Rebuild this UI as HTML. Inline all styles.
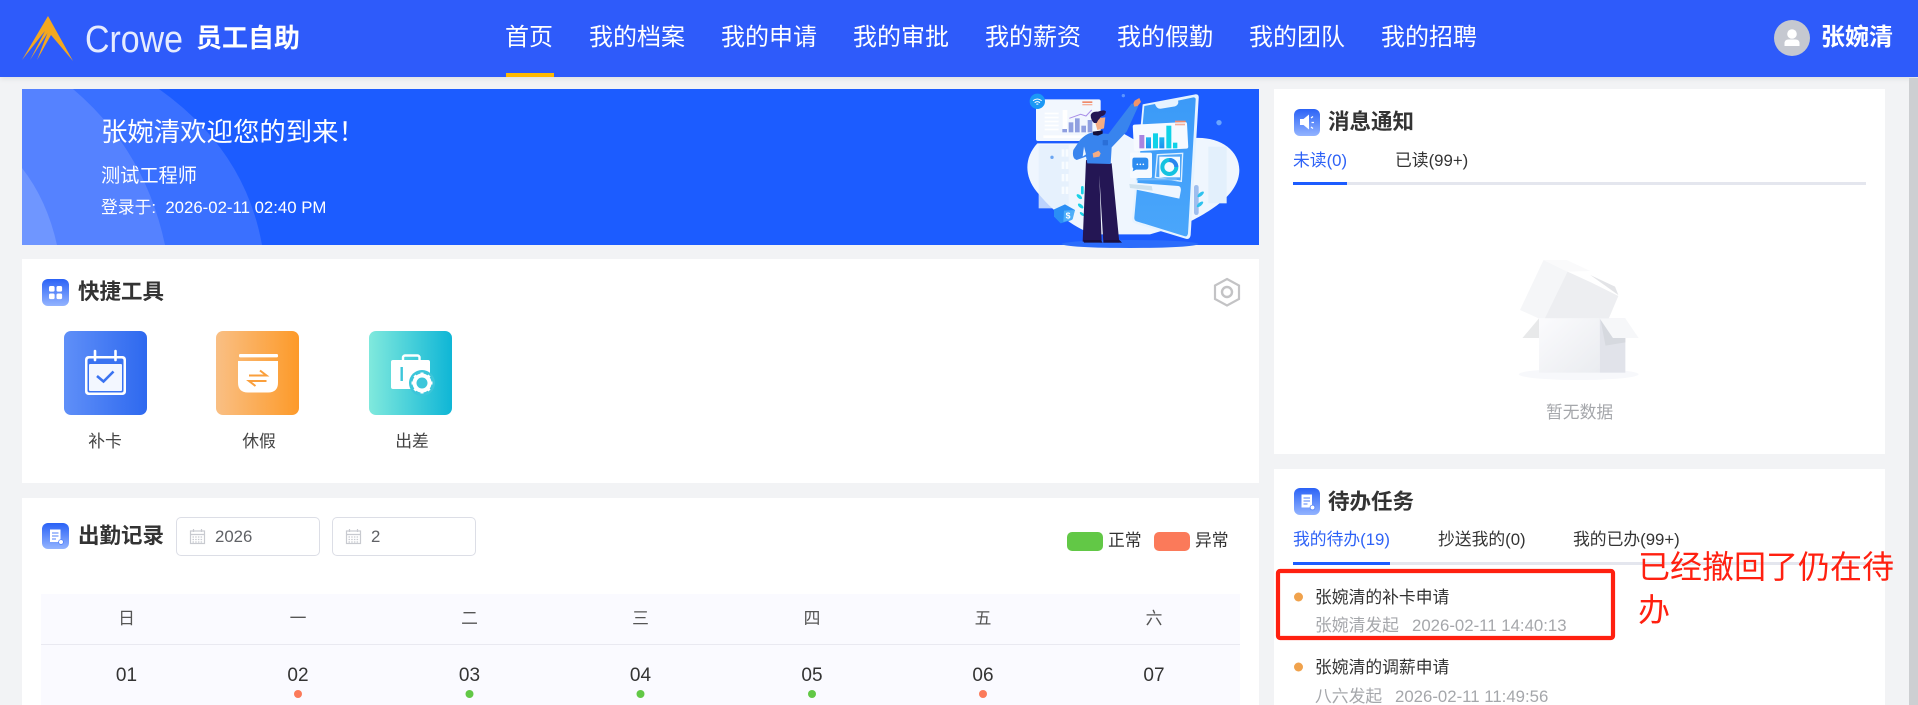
<!DOCTYPE html>
<html lang="zh">
<head>
<meta charset="utf-8">
<title>员工自助</title>
<style>
html,body{margin:0;padding:0;width:1918px;height:705px;overflow:hidden;background:#f2f3f5;}
body{position:relative;font-family:"Liberation Sans","Noto Sans CJK SC",sans-serif;color:#333;}
.b{position:absolute;}
.t{position:absolute;white-space:nowrap;height:30px;line-height:30px;}
.c{transform:translateX(-50%);}
.nav{font-size:24px;color:#fff;top:23px;}
.h{font-size:21.5px;font-weight:700;color:#333;}
.s{font-size:16.8px;}
.g{color:#a5a7ab;}
svg{position:absolute;left:0;top:0;}
</style>
</head>
<body>
<div class="b" style="left:0;top:0;width:1918px;height:77px;background:#2e5bfa;box-shadow:0 2px 5px rgba(0,0,0,.08);"></div>
<div class="b" style="left:1909px;top:78px;width:9px;height:627px;background:#cdcfd2;"></div>
<div class="b" style="left:22px;top:89px;width:1237px;height:156px;background:#1c5cff;"></div>
<div class="b" style="left:22px;top:259px;width:1237px;height:224px;background:#fff;"></div>
<div class="b" style="left:22px;top:498px;width:1237px;height:207px;background:#fff;"></div>
<div class="b" style="left:1274px;top:89px;width:611px;height:365px;background:#fff;"></div>
<div class="b" style="left:1274px;top:469px;width:611px;height:236px;background:#fff;"></div>
<div class="b" style="left:41px;top:594px;width:1199px;height:111px;background:#fafaff;"></div>
<div class="b" style="left:41px;top:644px;width:1199px;height:1px;background:#e9e9f1;"></div>
<div class="b" style="left:176px;top:517px;width:142px;height:37px;border:1px solid #dcdee6;border-radius:5px;"></div>
<div class="b" style="left:332px;top:517px;width:142px;height:37px;border:1px solid #dcdee6;border-radius:5px;"></div>
<div class="b" style="left:1293px;top:182px;width:573px;height:3px;background:#e4e6ee;"></div>
<div class="b" style="left:1293px;top:182px;width:54px;height:3px;background:#1c5cff;"></div>
<div class="b" style="left:1293px;top:562px;width:573px;height:3px;background:#e4e6ee;"></div>
<div class="b" style="left:1293px;top:562px;width:97px;height:3px;background:#1c5cff;"></div>
<div class="b" style="left:506px;top:73px;width:48px;height:4px;background:#ffb900;"></div>

<svg width="1918" height="705" viewBox="0 0 1918 705">
<defs>
<linearGradient id="sec" x1="0" y1="0" x2="0" y2="1"><stop offset="0" stop-color="#2a62f6"/><stop offset="1" stop-color="#93b4ff"/></linearGradient>
<linearGradient id="t1"><stop offset="0" stop-color="#5f8ff8"/><stop offset="1" stop-color="#2e69ef"/></linearGradient>
<linearGradient id="t2"><stop offset="0" stop-color="#f9bf84"/><stop offset="1" stop-color="#fd9a29"/></linearGradient>
<linearGradient id="t3"><stop offset="0" stop-color="#80e9dd"/><stop offset="1" stop-color="#0fb6d6"/></linearGradient>
<linearGradient id="ph" x1="0" y1="0" x2="0" y2="1"><stop offset="0" stop-color="#3b9af8"/><stop offset="1" stop-color="#4aa6fb"/></linearGradient>
<linearGradient id="fr" x1="0" y1="0" x2="1" y2="1"><stop offset="0" stop-color="#fbfbfd"/><stop offset="1" stop-color="#eaecf0"/></linearGradient>
<linearGradient id="bar" x1="0" y1="0" x2="0" y2="1"><stop offset="0" stop-color="#1cb8ee"/><stop offset="1" stop-color="#1f8ff0"/></linearGradient>
</defs>

<!-- logo -->
<path d="M48 16 L73 61 L51 35 L37 60 L47.500 33 L30 60 L45 31 L22 60 Z" fill="#f4a81f"/>
<text x="85" y="52" font-family="Liberation Sans" font-size="38" fill="#fff" textLength="98" lengthAdjust="spacingAndGlyphs" opacity=".88">Crowe</text>

<!-- avatar -->
<circle cx="1792" cy="38" r="18" fill="#c5c8d0"/>
<circle cx="1792" cy="34" r="4.8" fill="#fff"/>
<path d="M1784.5 46 v-2.5 q0-4 4-4 h7 q4 0 4 4 V46 Z" fill="#fff"/>

<!-- banner rings -->
<path d="M22 89 H159 Q245 150 262 245 H22 Z" fill="#3a70ff"/>
<path d="M22 89 H73 Q145 150 165 245 H22 Z" fill="#5582ff"/>
<path d="M22 168 Q47 200 57 245 H22 Z" fill="#6f96ff"/>

<!-- illustration -->
<g transform="translate(960 60) scale(.33333)">
<ellipse cx="510" cy="552" rx="205" ry="12" fill="#2b6cfb"/>
<path d="M232 250 C195 290 190 345 230 395 C275 450 335 500 400 523 L570 523 L680 490 C760 450 838 400 838 330 C838 265 770 225 690 235 L560 260 L480 215 L420 250 Z" fill="#eff6fe"/>
<rect x="236" y="255" width="90" height="190" fill="#e3f0fc" opacity=".8"/>
<g fill="#f8fcff"><rect x="305" y="268" width="8" height="22"/><rect x="317" y="268" width="8" height="22"/><rect x="305" y="305" width="8" height="22"/><rect x="317" y="305" width="8" height="22"/><rect x="305" y="342" width="8" height="22"/><rect x="317" y="342" width="8" height="22"/><rect x="305" y="380" width="8" height="22"/><rect x="317" y="380" width="8" height="22"/></g>
<rect x="745" y="260" width="55" height="170" fill="#e3f0fc"/>
<circle cx="276" cy="292" r="5" fill="#6aa5f2"/>
<rect x="228" y="118" width="194" height="125" rx="6" fill="#f2f7fe"/>
<g fill="#fff"><rect x="254" y="158" width="42" height="5"/><rect x="254" y="170" width="42" height="5"/><rect x="254" y="182" width="42" height="5"/><rect x="254" y="194" width="42" height="5"/><rect x="254" y="206" width="42" height="5"/><rect x="250" y="226" width="150" height="8"/><rect x="308" y="150" width="14" height="65"/></g>
<g fill="#8f9fe0"><rect x="307" y="207" width="14" height="10"/><rect x="326" y="187" width="14" height="30"/><rect x="345" y="175" width="14" height="42"/><rect x="364" y="197" width="14" height="20"/><rect x="383" y="180" width="14" height="37"/></g>
<path d="M328 175 L362 163 L378 168 L395 150" stroke="#a98fe8" stroke-width="3" fill="none"/>
<rect x="367" y="124" width="30" height="5" fill="#f08a6a"/><rect x="367" y="132" width="30" height="4" fill="#f5b09a"/>
<circle cx="232" cy="124" r="23" fill="#1b98f5"/>
<path d="M219 122 q13-10 26 0 M224 128 q8-6 16 0 M229 133 q3-2 6 0" stroke="#fff" stroke-width="3" fill="none"/>
<circle cx="490" cy="107" r="5" fill="#5b95ff"/>
<circle cx="777" cy="188" r="8" fill="#6aa5ff"/>
<!-- plants -->
<g fill="#19d2e6"><ellipse cx="358" cy="410" rx="10" ry="5" transform="rotate(40 358 410)"/><ellipse cx="362" cy="438" rx="10" ry="5" transform="rotate(40 362 438)"/><ellipse cx="366" cy="462" rx="8" ry="4" transform="rotate(40 366 462)"/><rect x="363" y="378" width="8" height="25" rx="4"/></g>
<g fill="#8ab0ea"><rect x="702" y="375" width="14" height="90" rx="7" opacity=".8"/></g>
<g fill="#2fc2ee"><ellipse cx="722" cy="403" rx="12" ry="5" transform="rotate(-40 722 403)"/><ellipse cx="720" cy="433" rx="12" ry="5" transform="rotate(-40 720 433)"/></g>
<!-- phone -->
<path d="M548 133 L706 103 Q718 102 716 116 L692 525 Q690 540 676 536 L525 490 Q515 487 516 476 Z" fill="#e6f3ff"/>
<path d="M553 138 L585 132 Q590 148 604 146 L645 139 Q658 134 654 122 L700 112 Q708 112 707 120 L684 520 Q682 532 672 528 L530 484 Q522 481 523 472 Z" fill="url(#ph)"/>
<rect x="520" y="190" width="163" height="80" rx="6" fill="#f6faff" transform="rotate(-3 600 230)"/>
<rect x="538" y="225" width="15" height="40" fill="#a884e0"/>
<rect x="558" y="232" width="15" height="33" fill="url(#bar)"/>
<rect x="579" y="220" width="15" height="45" fill="#10d2e8"/>
<rect x="598" y="232" width="15" height="33" fill="url(#bar)"/>
<rect x="619" y="197" width="15" height="68" fill="#10d2e8"/>
<rect x="639" y="248" width="13" height="17" fill="#10d2e8"/>
<rect x="645" y="182" width="32" height="5" fill="#f08a6a"/><rect x="645" y="191" width="30" height="5" fill="#f5b09a"/>
<rect x="510" y="278" width="66" height="76" rx="5" fill="#f6faff"/>
<path d="M522 293 h34 q9 0 9 9 v18 q0 9-9 9 h-28 l-10 5 l2-8 q-3-3-3-8 v-16 q0-9 5-9z" fill="#2d8cf0"/>
<circle cx="532" cy="313" r="2.5" fill="#fff"/><circle cx="541" cy="313" r="2.5" fill="#fff"/><circle cx="550" cy="313" r="2.5" fill="#fff"/>
<path d="M592 284 L668 280 L664 364 L586 352 Z" fill="#4fa6f8" stroke="#dff0ff" stroke-width="4"/>
<rect x="598" y="290" width="62" height="62" fill="#f4faff"/>
<circle cx="628" cy="321" r="21" fill="none" stroke="#14c3e0" stroke-width="12"/>
<path d="M628 300 a21 21 0 0 1 21 21" fill="none" stroke="#2a86ef" stroke-width="12"/>
<path d="M508 367 L655 378 Q665 380 662 395 L658 416 L510 385 Z" fill="#eef6ff"/>
<path d="M508 372 L575 378 L578 392 L510 384Z" fill="#cfe2ee"/>
<rect x="530" y="355" width="120" height="6" fill="#6fb7fa"/>
<!-- coin -->
<path d="M282 448 L315 433 L345 450 L335 480 L302 490 L282 470 Z" fill="#2a8ef5"/>
<path d="M312 452 L345 450 L338 478 L310 486 Z" fill="#4eaef9"/>
<text x="317" y="476" font-family="Liberation Sans" font-size="26" font-weight="700" fill="#fff">$</text>
<!-- man -->
<path d="M400 300 H378 L368 545 L425 548 L418 345 L430 548 L478 548 L455 310 Z" fill="#241654"/>
<path d="M378 540 L370 540 L372 548 H428 L422 540 Z M432 540 L430 548 H486 L478 540 Z" fill="#1a0f3e"/>
<path d="M360 240 Q385 215 405 218 L445 222 L515 130 L535 138 L500 215 L455 262 L452 312 L382 310 L378 290 L350 300 Q335 295 340 270 Z" fill="#3884ee"/>
<path d="M520 130 l4-8 14-8 l5 12 -10 12 -10 2z" fill="#f09468"/>
<path d="M398 280 l18-8 6 8 -4 10 -18 3z" fill="#f4ac84"/>
<path d="M372 260 L378 283 L368 290Z" fill="#eef6fe"/>
<path d="M398 215 l30-4 l0 10 l-14 6 l-14-2 z" fill="#15103a"/>
<path d="M402 175 L436 172 L432 205 L412 210 Z" fill="#f4ac84"/>
<path d="M392 165 q4-12 22-10 q20-8 24 0 q-2 12-14 14 q-6 8-10 12 l-4 8 -8 0 q-10-10-10-24z" fill="#241654"/>
<rect x="428" y="240" width="16" height="16" rx="2" fill="#2a6fd8"/>
</g>

<!-- section icons -->
<g>
<rect x="42" y="279" width="27" height="27" rx="6" fill="url(#sec)"/>
<rect x="49" y="286" width="5.6" height="5.6" rx="1.5" fill="#fff"/><rect x="56.5" y="286" width="5.6" height="5.6" rx="1.5" fill="#fff"/>
<rect x="49" y="293.5" width="5.6" height="5.6" rx="1.5" fill="#fff"/><rect x="56.5" y="293.5" width="5.6" height="5.6" rx="1.5" fill="#fff"/>
</g>
<g>
<rect x="42" y="523" width="27" height="26" rx="6" fill="url(#sec)"/>
<path d="M50 529.5 h10.5 v12.5 h-10.5 z" fill="#fff"/>
<path d="M52 533 h6.5 M52 536 h6.5 M52 539 h4" stroke="#4f7ff8" stroke-width="1"/>
<circle cx="61" cy="542" r="2.4" fill="#fff" stroke="#4f7ff8" stroke-width=".8"/>
</g>
<g>
<rect x="1294" y="109" width="26" height="27" rx="6" fill="url(#sec)"/>
<path d="M1300 119 h3.5 l5.5-4.5 v15 l-5.5-4.5 h-3.5 z" fill="#fff"/>
<path d="M1311.5 122.5 h2.5 M1311 118 l2-1.5 M1311 127 l2 1.5" stroke="#fff" stroke-width="1.3"/>
</g>
<g>
<rect x="1294" y="488" width="26" height="27" rx="6" fill="url(#sec)"/>
<path d="M1301.5 494.5 h10.5 v13 h-10.5 z" fill="#fff"/>
<path d="M1303.5 498 h6.5 M1303.5 501 h6.5 M1303.5 504 h4" stroke="#4f7ff8" stroke-width="1"/>
<circle cx="1312.5" cy="507.5" r="2.4" fill="#fff" stroke="#4f7ff8" stroke-width=".8"/>
</g>

<!-- hexagon -->
<path d="M1227 279 L1239 285.5 V299 L1227 305.5 L1215 299 V285.5 Z" fill="none" stroke="#c3c3c5" stroke-width="2.2"/>
<circle cx="1227" cy="292" r="5" fill="none" stroke="#c3c3c5" stroke-width="2.4"/>

<!-- tiles -->
<rect x="64" y="331" width="83" height="84" rx="7" fill="url(#t1)"/>
<rect x="85" y="356" width="41" height="39" rx="3.5" fill="#fff"/>
<rect x="87.5" y="358.5" width="36" height="34" rx="2" fill="#3a73f1"/>
<rect x="89" y="364" width="33" height="27" rx="1" fill="#f3f7ff"/>
<path d="M95 351 v9 M115.5 351 v9" stroke="#fff" stroke-width="2.6" stroke-linecap="round"/>
<path d="M97 376 l6.5 5.5 l10-10" fill="none" stroke="#3a73f1" stroke-width="2.6"/>

<rect x="216" y="331" width="83" height="84" rx="7" fill="url(#t2)"/>
<rect x="239" y="354" width="39" height="3.4" rx="1.2" fill="#fff"/>
<path d="M238 361 H278 V382.5 Q278 392.5 268 392.5 H248 Q238 392.5 238 382.5 Z" fill="#fff"/>
<path d="M249 375.5 H266.5 L260 370.5 M266.5 381 H249 L255.5 386" fill="none" stroke="#fa9f3c" stroke-width="2"/>

<rect x="369" y="331" width="83" height="84" rx="7" fill="url(#t3)"/>
<rect x="403" y="355.5" width="16.5" height="7" rx="2" fill="none" stroke="#fff" stroke-width="2.4"/>
<rect x="391" y="360" width="39" height="29" rx="2" fill="#fff"/>
<rect x="400.5" y="367" width="2.4" height="14" fill="#3cc6da"/>
<circle cx="422" cy="383" r="13" fill="#3cc6da"/>
<circle cx="422" cy="383" r="7.5" fill="none" stroke="#fff" stroke-width="4"/>
<path d="M422 372.5 v4 M422 389.5 v4 M411.5 383 h4 M428.5 383 h4 M414.5 375.5 l3 3 M426.5 387.5 l3 3 M414.5 390.5 l3-3 M426.5 378.5 l3-3" stroke="#fff" stroke-width="3"/>

<!-- input calendar icons -->
<g fill="none" stroke="#c8cad0" stroke-width="1.2">
<rect x="190.5" y="531" width="14" height="12.5"/><path d="M190.5 534.5 h14 M193.5 529 v3 M201.5 529 v3"/>
<path d="M192.5 537 h10 M192.5 539.5 h10 M192.5 542 h10" stroke-dasharray="1.5 1.2"/>
<rect x="346.5" y="531" width="14" height="12.5"/><path d="M346.5 534.5 h14 M349.5 529 v3 M357.5 529 v3"/>
<path d="M348.5 537 h10 M348.5 539.5 h10 M348.5 542 h10" stroke-dasharray="1.5 1.2"/>
</g>

<!-- legend -->
<rect x="1067" y="532" width="36" height="19" rx="5" fill="#62c846"/>
<rect x="1154" y="532" width="36" height="19" rx="5" fill="#fb7a5a"/>

<!-- dots -->
<circle cx="298" cy="694" r="4" fill="#fb7a5a"/>
<circle cx="469.5" cy="694" r="4" fill="#62c846"/>
<circle cx="640.5" cy="694" r="4" fill="#62c846"/>
<circle cx="812" cy="694" r="4" fill="#62c846"/>
<circle cx="983" cy="694" r="4" fill="#fb7a5a"/>
<circle cx="1298.5" cy="597" r="4.5" fill="#f0a24c"/>
<circle cx="1298.5" cy="667" r="4.5" fill="#f0a24c"/>

<!-- empty box -->
<g transform="translate(1270 90) scale(.4132 .33333)">
<ellipse cx="747" cy="853" rx="145" ry="17" fill="#f7f8fb"/>
<path d="M605 660 L662 510 L720 545 L665 685 L650 685 Z" fill="#f5f6f8"/>
<path d="M662 510 L718 510 L775 543 L720 545 Z" fill="#fafafb"/>
<path d="M720 545 L778 578 L843 618 L820 685 L665 685 Z" fill="#edeef1"/>
<path d="M775 555 L835 590 L843 615 Z" fill="#e3e4e7"/>
<path d="M651 685 L611 744 H651 Z" fill="#e8e9ea"/>
<rect x="651" y="685" width="147" height="163" fill="url(#fr)"/>
<rect x="798" y="685" width="62" height="163" fill="#e1e3ea"/>
<path d="M800 690 L830 744 H860 V757 L812 767 Z" fill="#d6d9df"/>
<path d="M798 685 H860 L892 744 H830 Z" fill="#f6f7f9"/>
</g>

<!-- red annotation -->
<rect x="1278" y="571" width="335" height="67" rx="2" fill="none" stroke="#ff2010" stroke-width="4.2"/>
</svg>

<!-- header text -->
<span class="t" style="left:196px;top:23px;font-size:26px;font-weight:700;color:#fff;">员工自助</span>
<span class="t nav" style="left:505px;">首页</span>
<span class="t nav" style="left:589px;">我的档案</span>
<span class="t nav" style="left:721px;">我的申请</span>
<span class="t nav" style="left:853px;">我的审批</span>
<span class="t nav" style="left:985px;">我的薪资</span>
<span class="t nav" style="left:1117px;">我的假勤</span>
<span class="t nav" style="left:1249px;">我的团队</span>
<span class="t nav" style="left:1381px;">我的招聘</span>
<span class="t" style="left:1821px;top:23px;font-size:24px;font-weight:700;color:#fff;">张婉清</span>

<!-- banner text -->
<span class="t" style="left:101px;top:117px;font-size:26.4px;color:#fff;">张婉清欢迎您的到来！</span>
<span class="t" style="left:101px;top:162px;font-size:19.2px;color:#fff;">测试工程师</span>
<span class="t" style="left:101px;top:193px;font-size:16.8px;color:#fff;">登录于:&nbsp; 2026-02-11 02:40 PM</span>

<!-- section titles -->
<span class="t h" style="left:78px;top:277px;">快捷工具</span>
<span class="t h" style="left:78px;top:521px;">出勤记录</span>
<span class="t h" style="left:1328px;top:107px;">消息通知</span>
<span class="t h" style="left:1328px;top:487px;">待办任务</span>

<!-- tools -->
<span class="t s c" style="left:105px;top:427px;color:#444;">补卡</span>
<span class="t s c" style="left:259px;top:427px;color:#444;">休假</span>
<span class="t s c" style="left:412px;top:427px;color:#444;">出差</span>

<!-- inputs + legend -->
<span class="t s" style="left:215px;top:522px;color:#606266;">2026</span>
<span class="t s" style="left:371px;top:522px;color:#606266;">2</span>
<span class="t s" style="left:1108px;top:526px;color:#333;">正常</span>
<span class="t s" style="left:1195px;top:526px;color:#333;">异常</span>

<!-- table -->
<span class="t s c" style="left:126.5px;top:604px;color:#555;">日</span>
<span class="t s c" style="left:298px;top:604px;color:#555;">一</span>
<span class="t s c" style="left:469.5px;top:604px;color:#555;">二</span>
<span class="t s c" style="left:640.5px;top:604px;color:#555;">三</span>
<span class="t s c" style="left:812px;top:604px;color:#555;">四</span>
<span class="t s c" style="left:983px;top:604px;color:#555;">五</span>
<span class="t s c" style="left:1154px;top:604px;color:#555;">六</span>
<span class="t c" style="left:126.5px;top:661px;font-size:19px;">01</span>
<span class="t c" style="left:298px;top:661px;font-size:19px;">02</span>
<span class="t c" style="left:469.5px;top:661px;font-size:19px;">03</span>
<span class="t c" style="left:640.5px;top:661px;font-size:19px;">04</span>
<span class="t c" style="left:812px;top:661px;font-size:19px;">05</span>
<span class="t c" style="left:983px;top:661px;font-size:19px;">06</span>
<span class="t c" style="left:1154px;top:661px;font-size:19px;">07</span>

<!-- right tabs -->
<span class="t s" style="left:1293px;top:146px;color:#2e62f6;">未读(0)</span>
<span class="t s" style="left:1395px;top:146px;color:#333;">已读(99+)</span>
<span class="t s g" style="left:1546px;top:398px;">暂无数据</span>
<span class="t s" style="left:1293px;top:525px;color:#2e62f6;">我的待办(19)</span>
<span class="t s" style="left:1438px;top:525px;color:#333;">抄送我的(0)</span>
<span class="t s" style="left:1573px;top:525px;color:#333;">我的已办(99+)</span>

<!-- tasks -->
<span class="t s" style="left:1315px;top:583px;color:#333;">张婉清的补卡申请</span>
<span class="t s g" style="left:1315px;top:611px;">张婉清发起</span>
<span class="t s g" style="left:1412px;top:611px;">2026-02-11 14:40:13</span>
<span class="t s" style="left:1315px;top:653px;color:#333;">张婉清的调薪申请</span>
<span class="t s g" style="left:1315px;top:682px;">八六发起</span>
<span class="t s g" style="left:1395px;top:682px;">2026-02-11 11:49:56</span>

<!-- annotation text -->
<span class="t" style="left:1638px;top:552px;font-size:32px;color:#ff2010;">已经撤回了仍在待</span>
<span class="t" style="left:1638px;top:595px;font-size:32px;color:#ff2010;">办</span>
</body>
</html>
